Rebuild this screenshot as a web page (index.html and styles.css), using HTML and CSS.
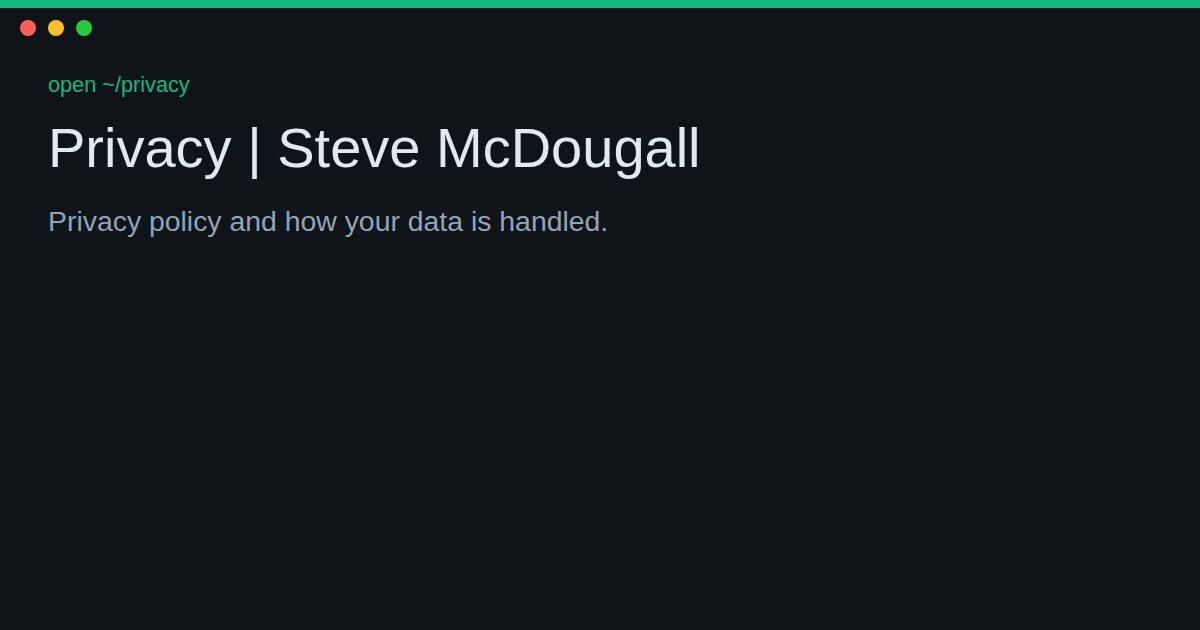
FILE: index.html
```html
<!DOCTYPE html>
<html>
<head>
<meta charset="utf-8">
<link rel="stylesheet" href="styles.css">
</head>
<body>
<div class="topbar"></div>
<div class="dots">
  <span class="dot red"></span>
  <span class="dot yellow"></span>
  <span class="dot green"></span>
</div>
<main class="content">
  <div class="prompt">open ~/privacy</div>
  <h1 class="title">Privacy | Steve McDougall</h1>
  <p class="desc">Privacy policy and how your data is handled.</p>
</main>
</body>
</html>
```
FILE: styles.css
```css
html, body {
  margin: 0;
  padding: 0;
}
body {
  width: 1200px;
  height: 630px;
  background: #0f1419;
  font-family: "Liberation Sans", Arial, sans-serif;
  overflow: hidden;
}
.topbar {
  height: 8px;
  background: #10b981;
}
.dots {
  display: flex;
  gap: 12px;
  padding: 12px 20px 0;
}
.dot {
  width: 16px;
  height: 16px;
  border-radius: 50%;
  display: block;
}
.red { background: #ff5f56; }
.yellow { background: #ffbd2e; }
.green { background: #27c93f; }
.content {
  padding: 37px 48px 0;
}
.prompt {
  color: #10b981;
  font-size: 21.7px;
  line-height: 24px;
}
.title {
  margin: 19px 0 0;
  color: #e2e8f0;
  font-size: 56px;
  font-weight: 400;
  line-height: 64px;
}
.desc {
  margin: 23px 0 0;
  color: #94a3b8;
  font-size: 28.4px;
  line-height: 36px;
}
```
